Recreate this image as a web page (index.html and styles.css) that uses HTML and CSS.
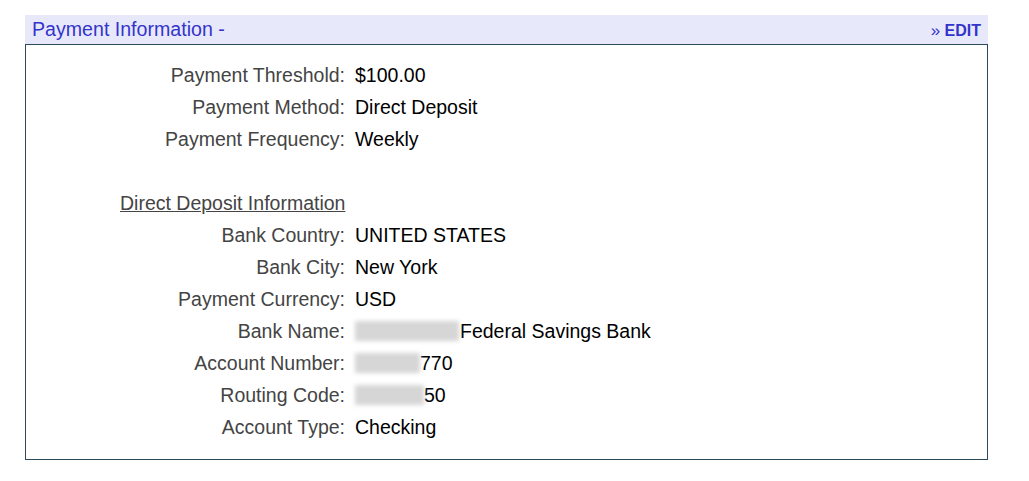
FILE: index.html
```html
<!DOCTYPE html>
<html>
<head>
<meta charset="utf-8">
<link rel="stylesheet" href="styles.css">
</head>
<body>
<div class="panel">
  <div class="panel-head">
    <span class="title">Payment Information -</span>
    <a class="edit" href="#"><span class="raquo">»</span> EDIT</a>
  </div>
  <div class="panel-body">
    <div class="row"><span class="label">Payment Threshold:</span><span class="value">$100.00</span></div>
    <div class="row"><span class="label">Payment Method:</span><span class="value">Direct Deposit</span></div>
    <div class="row"><span class="label">Payment Frequency:</span><span class="value">Weekly</span></div>
    <div class="row spacer"></div>
    <div class="row"><span class="label subhead"><u>Direct Deposit Information</u></span></div>
    <div class="row"><span class="label">Bank Country:</span><span class="value">UNITED STATES</span></div>
    <div class="row"><span class="label">Bank City:</span><span class="value">New York</span></div>
    <div class="row"><span class="label">Payment Currency:</span><span class="value">USD</span></div>
    <div class="row"><span class="label">Bank Name:</span><span class="value"><span class="blur blur-bank"></span>Federal Savings Bank</span></div>
    <div class="row"><span class="label">Account Number:</span><span class="value"><span class="blur blur-acct"></span>770</span></div>
    <div class="row"><span class="label">Routing Code:</span><span class="value"><span class="blur blur-route"></span>50</span></div>
    <div class="row"><span class="label">Account Type:</span><span class="value">Checking</span></div>
  </div>
</div>
</body>
</html>
```

FILE: styles.css
```css
html, body {
  margin: 0;
  padding: 0;
  background: #ffffff;
}
body {
  font-family: "Liberation Sans", Arial, sans-serif;
  padding: 15px 0 0 25px;
}
.panel {
  width: 963px;
}
.panel-head {
  height: 29px;
  background: #e7e9fa;
  display: flex;
  align-items: center;
  justify-content: space-between;
  padding: 0 7px 0 7px;
}
.title {
  font-size: 19.6px;
  color: #3434cc;
}
.edit {
  font-size: 16px;
  font-weight: bold;
  color: #3434cc;
  text-decoration: none;
  padding-top: 2px;
}
.raquo {
  font-weight: normal;
  font-size: 17px;
}
.panel-body {
  border: 1px solid #2c4a5a;
  padding: 14px 0 16px 0;
}
.row {
  display: flex;
  height: 32px;
  align-items: center;
  font-size: 19.5px;
}
.label {
  width: 319px;
  text-align: right;
  color: #444444;
  flex: none;
}
.subhead {
  padding-left: 94px;
  text-align: left;
}
.value {
  margin-left: 10px;
  color: #000000;
  display: flex;
  align-items: center;
}
.blur {
  display: inline-block;
  height: 20px;
  background: #d6d6d6;
  filter: blur(2px);
}
.blur-bank { width: 104px; margin-right: 1px; }
.blur-acct { width: 65px; }
.blur-route { width: 69px; }
```
